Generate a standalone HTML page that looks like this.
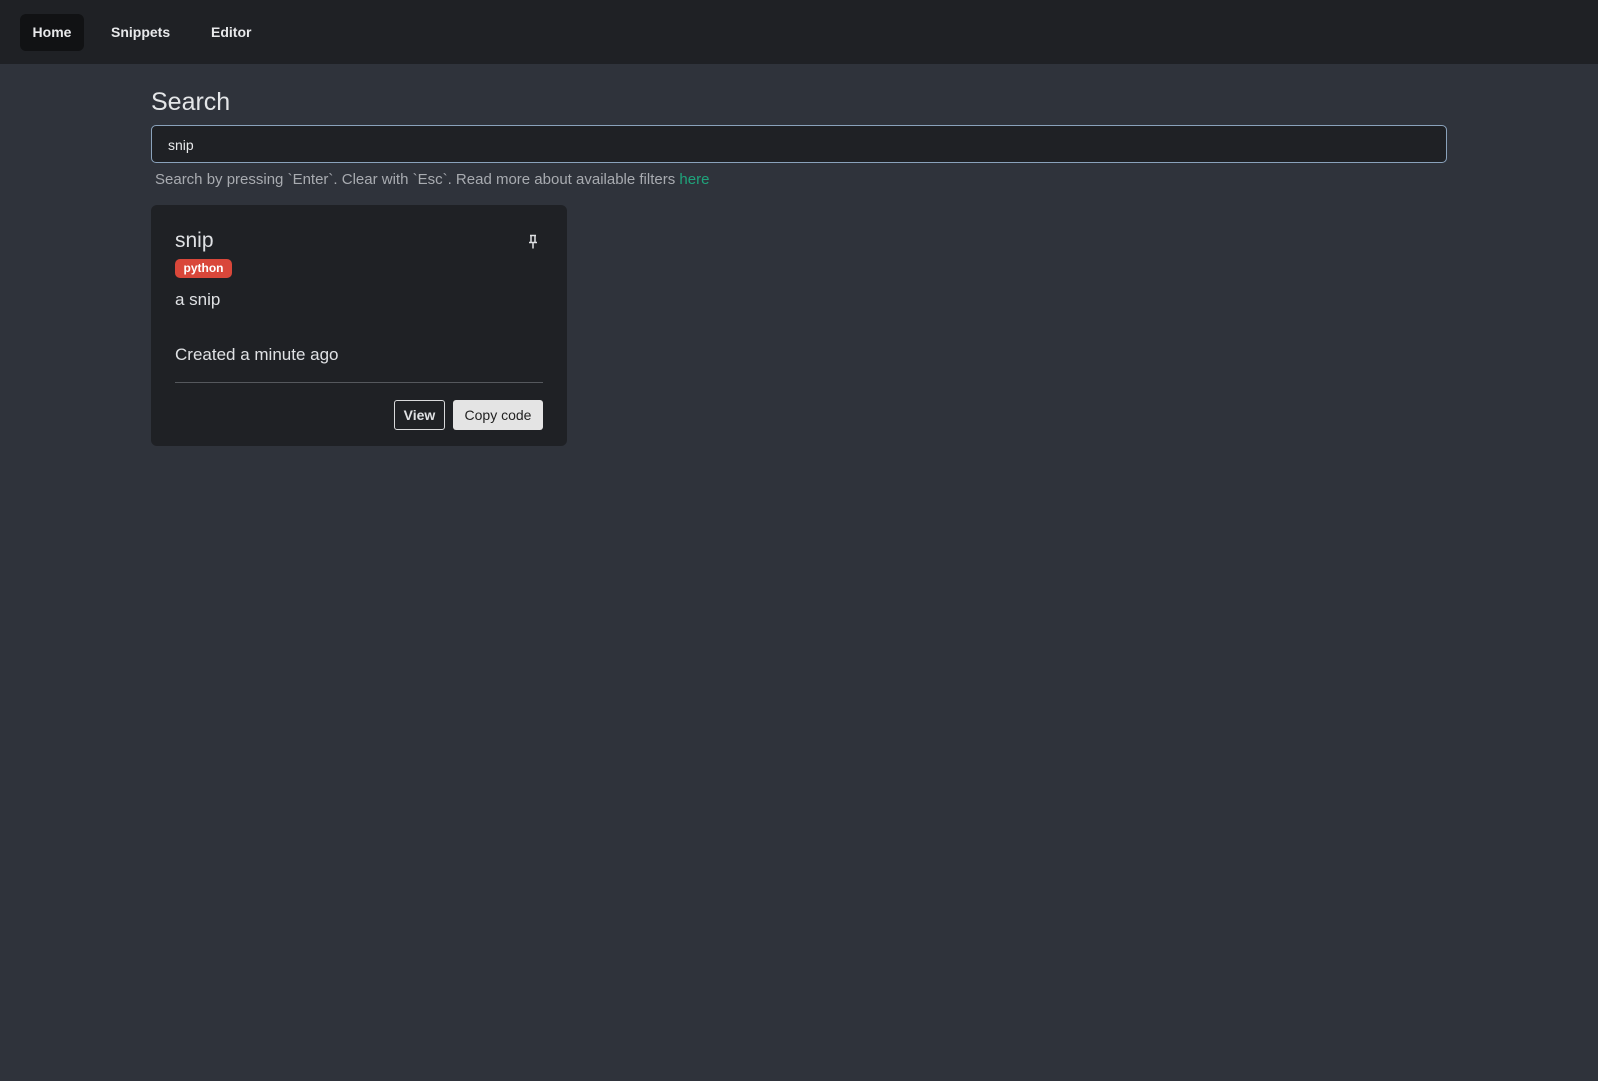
<!DOCTYPE html>
<html><head><meta charset="utf-8"><style>
*{box-sizing:border-box;margin:0;padding:0}
body{width:1598px;height:1081px;background:#2f333b;font-family:"Liberation Sans",sans-serif;color:#dfe1e4;position:relative;overflow:hidden}
.nav{position:absolute;left:0;top:0;width:1598px;height:64px;background:#1f2125}
.nav a{position:absolute;top:14px;height:37px;line-height:37px;font-size:14px;color:#e8e9eb;font-weight:bold;text-decoration:none}
.home{left:20px;width:64px;text-align:center;background:#111214;border-radius:6px}
h1{position:absolute;left:151px;top:88px;font-size:25px;font-weight:normal;color:#e4e6e8}
.inp{position:absolute;left:151px;top:125px;width:1296px;height:38px;background:#1f2125;border:1px solid #8aa2bb;border-radius:5px;font-size:14px;padding:11px 16px;color:#e8e9eb}
.help{position:absolute;left:155px;top:171px;font-size:15px;color:#a8abb0}
.help span{color:#1fa37b}
.card{position:absolute;left:151px;top:205px;width:416px;height:241px;background:#1f2125;border-radius:6px}
.t{position:absolute;left:24px;top:24px;font-size:21px}
.badge{position:absolute;left:24px;top:54px;width:57px;height:19px;background:#d9473a;border-radius:5px;color:#fff;font-size:12px;font-weight:bold;text-align:center;line-height:19px}
.d{position:absolute;left:24px;top:85px;font-size:17px}
.c{position:absolute;left:24px;top:140px;font-size:17px}
.hr{position:absolute;left:24px;top:177px;width:368px;height:1px;background:#55585d}
.b1{position:absolute;left:243px;top:195px;width:51px;height:30px;border:1px solid #d8d9db;border-radius:3px;font-size:14px;font-weight:bold;text-align:center;line-height:28px}
.b2{position:absolute;left:302px;top:195px;width:90px;height:30px;background:#e4e4e4;border-radius:3px;font-size:14px;color:#222;text-align:center;line-height:30px}
</style></head><body>
<div class="nav"><a class="home">Home</a><a style="left:111px">Snippets</a><a style="left:211px">Editor</a></div>
<h1>Search</h1>
<div class="inp">snip</div>
<div class="help">Search by pressing `Enter`. Clear with `Esc`. Read more about available filters <span>here</span></div>
<div class="card">
<div class="t">snip</div>
<svg style="position:absolute;left:376px;top:29px" width="12" height="16" viewBox="0 0 12 16"><path d="M3 1.5h6M4 1.5v6.5M8 1.5v6.5M2 8.5h8M6 8.5v6" stroke="#dfe1e4" stroke-width="1.5" fill="none"/></svg>
<div class="badge">python</div>
<div class="d">a snip</div>
<div class="c">Created a minute ago</div>
<div class="hr"></div>
<div class="b1">View</div>
<div class="b2">Copy code</div>
</div>
</body></html>
